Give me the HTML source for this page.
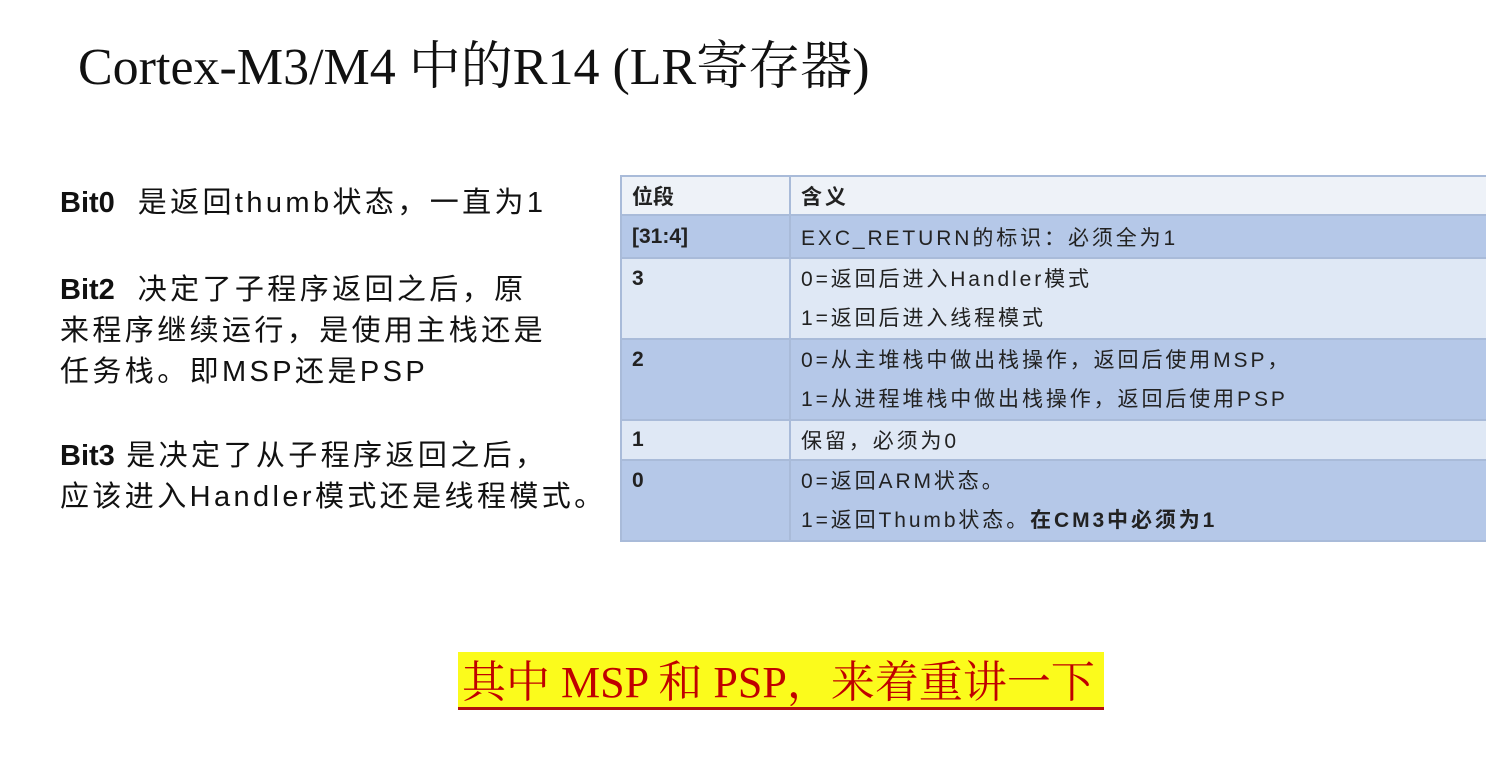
<!DOCTYPE html>
<html><head><meta charset="utf-8"><style>
body{margin:0;width:1486px;height:757px;background:#fff;position:relative;overflow:hidden;font-family:"Liberation Sans","Noto Sans CJK SC",sans-serif;}
.t{position:absolute;left:78px;top:24px;font-family:"Liberation Serif","Noto Serif CJK SC",serif;font-size:52px;color:#111;white-space:nowrap;}
.l{position:absolute;left:60px;font-size:29px;letter-spacing:3.4px;color:#111;white-space:nowrap;line-height:41px;}
.l b{font-weight:bold;letter-spacing:0;}
table{position:absolute;left:620px;top:175px;width:880px;border-collapse:collapse;font-size:21px;letter-spacing:2.9px;color:#222;font-family:"Liberation Sans","Noto Sans CJK SC",sans-serif;}
td{border:2px solid #a9bbd9;vertical-align:top;padding:0 10px;}
td:first-child{width:147px;font-weight:bold;letter-spacing:0;}
.d{background:#b5c8e8}.w{background:#dfe8f5}.h{background:#eef2f8}
.sub{position:absolute;left:458px;top:652px;height:58px;width:646px;background:#fbfb1c;border-bottom:3px solid #b01010;font-family:"Liberation Serif","Noto Serif CJK SC",serif;font-size:44px;color:#c00000;line-height:62px;padding-left:4px;box-sizing:border-box;white-space:nowrap;}
</style></head><body>
<div class="t">Cortex-M3/M4 中的R14 (LR寄存器)</div>
<div class="l" style="top:183px"><b>Bit0</b>&nbsp; 是返回thumb状态，一直为1</div>
<div class="l" style="top:270px"><b>Bit2</b>&nbsp; 决定了子程序返回之后，原<br>来程序继续运行，是使用主栈还是<br>任务栈。即MSP还是PSP</div>
<div class="l" style="top:436px"><b>Bit3</b> 是决定了从子程序返回之后，<br>应该进入Handler模式还是线程模式。</div>
<table>
<tr class="h" style="height:39px"><td style="vertical-align:middle">位段</td><td style="vertical-align:middle;font-weight:bold">含义</td></tr>
<tr class="d" style="height:43px"><td style="vertical-align:middle">[31:4]</td><td style="vertical-align:middle">EXC_RETURN的标识：必须全为1</td></tr>
<tr class="w" style="height:80px"><td style="padding-top:8px">3</td><td style="line-height:39px;padding-top:1px">0=返回后进入Handler模式<br>1=返回后进入线程模式</td></tr>
<tr class="d" style="height:80px"><td style="padding-top:8px">2</td><td style="line-height:39px;padding-top:1px">0=从主堆栈中做出栈操作，返回后使用MSP，<br>1=从进程堆栈中做出栈操作，返回后使用PSP</td></tr>
<tr class="w" style="height:40px"><td style="vertical-align:middle">1</td><td style="vertical-align:middle">保留，必须为0</td></tr>
<tr class="d" style="height:79px"><td style="padding-top:8px">0</td><td style="line-height:39px;padding-top:1px">0=返回ARM状态。<br>1=返回Thumb状态。<b>在CM3中必须为1</b></td></tr>
</table>
<div class="sub">其中 MSP 和 PSP，来着重讲一下</div>
</body></html>
